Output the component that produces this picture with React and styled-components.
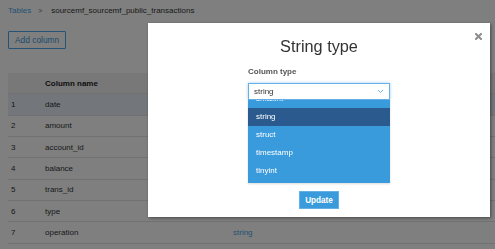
import React from "react";
import styled, { createGlobalStyle } from "styled-components";

const GlobalStyle = createGlobalStyle`
  html, body {
    margin: 0;
    background: #fff;
    font-family: "Liberation Sans", Arial, sans-serif;
    color: #333;
  }
`;

const columns = [
  { name: "date", type: "date" },
  { name: "amount", type: "double" },
  { name: "account_id", type: "int" },
  { name: "balance", type: "double" },
  { name: "trans_id", type: "int" },
  { name: "type", type: "string" },
  { name: "operation", type: "string" },
];

const typeOptions = ["smallint", "string", "struct", "timestamp", "tinyint"];

export default function App() {
  return (
    <>
      <GlobalStyle />
      <Page>
        <Breadcrumb>
          <a>Tables</a>
          <span className="sep">&gt;</span>
          <span>sourcemf_sourcemf_public_transactions</span>
        </Breadcrumb>
        <OutlineButton>Add column</OutlineButton>
        <Table>
          <thead>
            <tr>
              <th className="num"></th>
              <th className="name">Column name</th>
              <th>Type</th>
            </tr>
          </thead>
          <tbody>
            {columns.map((c, i) => (
              <Row key={c.name} $hover={i === 0}>
                <td className="num">{i + 1}</td>
                <td className="name">{c.name}</td>
                <td>
                  <a>{c.type}</a>
                </td>
              </Row>
            ))}
          </tbody>
        </Table>
      </Page>

      <Overlay />
      <Modal>
        <Close aria-label="close">
          <svg width="7" height="7" viewBox="0 0 7 7">
            <path d="M1 1L6 6M6 1L1 6" stroke="#8c8c8c" strokeWidth="2" strokeLinecap="square" />
          </svg>
        </Close>
        <Title>String type</Title>
        <Form>
          <Label>Column type</Label>
          <Select>
            <span>string</span>
            <svg width="7" height="5" viewBox="0 0 7 5">
              <path d="M1 1L3.5 3.5L6 1" fill="none" stroke="#6fb6e6" strokeWidth="1" />
            </svg>
          </Select>
          <Menu>
            <MenuList>
              {typeOptions.map((t) => (
                <MenuItem key={t} $selected={t === "string"}>
                  {t}
                </MenuItem>
              ))}
            </MenuList>
          </Menu>
          <PrimaryButton>Update</PrimaryButton>
        </Form>
      </Modal>
    </>
  );
}

const Page = styled.div`
  padding: 5px 0 0 8px;
  font-size: 8px;
  a {
    color: #4aa6e8;
    cursor: pointer;
  }
`;

const Breadcrumb = styled.div`
  display: flex;
  align-items: center;
  gap: 7px;
  line-height: 12px;
  font-size: 8px;
  .sep {
    color: #666;
    font-size: 7px;
    margin-right: 2px;
  }
`;

const OutlineButton = styled.button`
  margin-top: 14px;
  height: 18px;
  padding: 0 6px;
  background: #fff;
  border: 1px solid #4aa6e8;
  color: #3596d8;
  font-family: inherit;
  font-size: 8.4px;
  border-radius: 1px;
`;

const Table = styled.table`
  margin-top: 24px;
  width: 100%;
  border-collapse: collapse;
  font-size: 8px;
  th,
  td {
    height: 20.33px;
    padding: 0;
    text-align: left;
    border-bottom: 1px solid #e2e2e2;
  }
  thead th {
    background: #f1f1f1;
    font-weight: bold;
    color: #222;
  }
  .num {
    width: 34px;
    padding-left: 3px;
  }
  .name {
    width: 188px;
  }
`;

const Row = styled.tr`
  background: ${(p) => (p.$hover ? "#e6eef6" : "transparent")};
  td {
    color: #333;
  }
`;

const Overlay = styled.div`
  position: fixed;
  inset: 0;
  background: rgba(0, 0, 0, 0.5);
`;

const Modal = styled.div`
  position: fixed;
  left: 148px;
  top: 23px;
  width: 342px;
  height: 194px;
  box-sizing: border-box;
  background: #fff;
  box-shadow: 1px 1px 3px rgba(0, 0, 0, 0.45);
  display: flex;
  flex-direction: column;
  align-items: center;
  padding-top: 13px;
`;

const Close = styled.button`
  position: absolute;
  top: 31px;
  right: 7px;
  top: 9px;
  width: 9px;
  height: 9px;
  padding: 0;
  border: 0;
  background: none;
  display: flex;
  align-items: center;
  justify-content: center;
`;

const Title = styled.h2`
  margin: 0;
  font-size: 16.3px;
  line-height: 20px;
  font-weight: normal;
  color: #333;
`;

const Form = styled.div`
  width: 142px;
  margin-top: 11px;
  display: flex;
  flex-direction: column;
`;

const Label = styled.label`
  font-size: 8px;
  line-height: 10px;
  font-weight: bold;
  color: #555;
`;

const Select = styled.div`
  margin-top: 6px;
  height: 17px;
  box-sizing: border-box;
  border: 1px solid #66afe9;
  box-shadow: 0 0 3px rgba(102, 175, 233, 0.6);
  display: flex;
  align-items: center;
  justify-content: space-between;
  padding: 0 5px 0 5px;
  font-size: 8px;
  color: #333;
  background: #fff;
`;

const Menu = styled.div`
  height: 83px;
  overflow: hidden;
  background: #3a9bdc;
  box-shadow: 0 1px 2px rgba(0, 0, 0, 0.15);
`;

const MenuList = styled.div`
  margin-top: -10px;
`;

const MenuItem = styled.div`
  height: 18px;
  line-height: 18px;
  padding-left: 8px;
  font-size: 8px;
  color: #fff;
  background: ${(p) => (p.$selected ? "#2b5b8e" : "transparent")};
`;

const PrimaryButton = styled.button`
  align-self: center;
  margin-top: 8px;
  width: 40px;
  height: 18px;
  padding: 0;
  background: #3a9bdc;
  border: 1px solid #62b2e6;
  color: #fff;
  font-family: inherit;
  font-weight: bold;
  font-size: 8.2px;
`;
